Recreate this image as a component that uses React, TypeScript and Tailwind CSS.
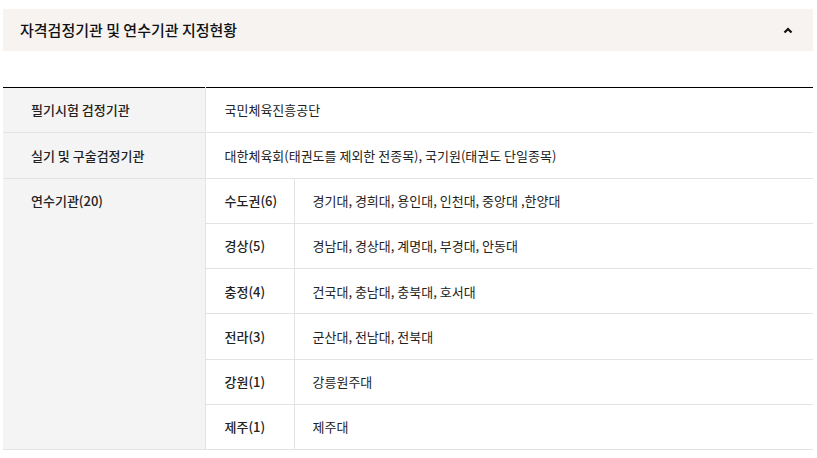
const regions = [
  { name: '수도권(6)', list: '경기대, 경희대, 용인대, 인천대, 중앙대 ,한양대' },
  { name: '경상(5)', list: '경남대, 경상대, 계명대, 부경대, 안동대' },
  { name: '충정(4)', list: '건국대, 충남대, 충북대, 호서대' },
  { name: '전라(3)', list: '군산대, 전남대, 전북대' },
  { name: '강원(1)', list: '강릉원주대' },
  { name: '제주(1)', list: '제주대' },
];

export default function App() {
  return (
    <div
      className="min-h-[458px] bg-white pl-[3px] pr-[4px] pt-[9px] text-[#222]"
      style={{ fontFamily: '"Noto Sans CJK KR", "Noto Sans", sans-serif' }}
    >
      {/* Accordion header */}
      <div className="flex h-[42px] items-center justify-between bg-[#f6f3f0] pl-[17px] pr-[20px]">
        <h2 className="text-[15px] font-medium text-[#111]">
          자격검정기관 및 연수기관 지정현황
        </h2>
        <svg width="10" height="7" viewBox="0 0 10 7">
          <path d="M1.5 5.5 L5 2 L8.5 5.5" fill="none" stroke="#111" strokeWidth="2.2" />
        </svg>
      </div>

      {/* Table */}
      <table className="mt-[36px] w-full border-collapse border-t border-t-black text-[13px]">
        <colgroup>
          <col className="w-[202px]" />
          <col className="w-[89px]" />
          <col />
        </colgroup>
        <tbody>
          <tr className="h-[45.3px] border-b border-[#e3e3e3]">
            <th className="bg-[#f4f4f4] pl-[28px] text-left font-medium border-r border-[#e3e3e3]">
              필기시험 검정기관
            </th>
            <td colSpan={2} className="pl-[19px]">
              국민체육진흥공단
            </td>
          </tr>
          <tr className="h-[45.3px] border-b border-[#e3e3e3]">
            <th className="bg-[#f4f4f4] pl-[28px] text-left font-medium border-r border-[#e3e3e3]">
              실기 및 구술검정기관
            </th>
            <td colSpan={2} className="pl-[19px]">
              대한체육회(태권도를 제외한 전종목), 국기원(태권도 단일종목)
            </td>
          </tr>
          {regions.map((r, i) => (
            <tr key={r.name} className="h-[45.3px] border-b border-[#e3e3e3]">
              {i === 0 && (
                <th
                  rowSpan={regions.length}
                  className="bg-[#f4f4f4] pl-[28px] pt-[12px] text-left align-top font-medium border-r border-[#e3e3e3]"
                >
                  연수기관(20)
                </th>
              )}
              <td className="pl-[19px] font-medium border-r border-[#e3e3e3]">{r.name}</td>
              <td className="pl-[18px]">{r.list}</td>
            </tr>
          ))}
        </tbody>
      </table>
    </div>
  );
}
